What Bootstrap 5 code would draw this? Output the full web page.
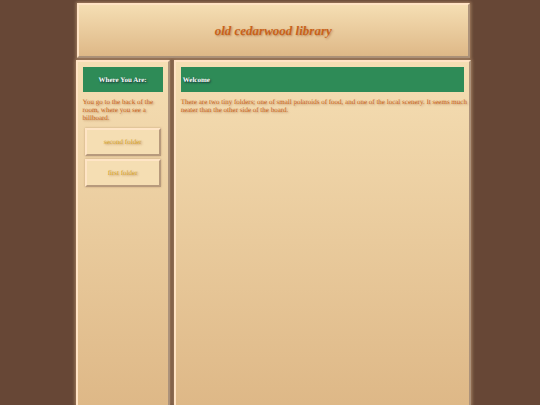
<!DOCTYPE html>
<html lang="en">
<head>
<meta charset="utf-8">
<meta name="viewport" content="width=device-width, initial-scale=1">
<title>old cedarwood library</title>
<link href="https://cdn.jsdelivr.net/npm/bootstrap@5.3.0/dist/css/bootstrap.min.css" rel="stylesheet">
<style>
body { background: #674736; color: #c8641e; font: 7px/8px "Liberation Serif", "Times New Roman", serif; text-rendering: geometricPrecision; text-shadow: 1px 1px 2px rgba(139,69,19,.45); }
.library { width: 73.2%; margin-left: 14%; }
.panel {
  background: linear-gradient(#f5deb3, #deb887);
  border: 2px solid; border-color: #ffe3c4 #ac927a #ac927a #ffe3c4;
  box-shadow: 0 0 3px 1px #a48061;
}
.masthead { min-height: 55px; margin: 3px 1px 2px; }
.masthead h1 { font-size: 13px; line-height: 16px; font-weight: 700; font-style: italic; color: #c8621a; }
.panels { gap: 4px; }
.side { width: 23.8%; }
.side, .main { padding: 5px; }
.main p { margin: 0 -4px 0 0; }
.banner { background: #2e8b57; color: #fff; min-height: 25px; padding: 0 2px; margin-bottom: 6px; }
.banner h2 { font-size: 7px; line-height: 8px; font-weight: 700; text-shadow: 1px 1px 2px #123; }
.folders { gap: 3px; padding: 0 2px; margin-top: 6px; }
.folder {
  font-size: 7px; line-height: 8px; min-height: 28px; color: #d4a32a; background: #f5deb3;
  border: 2px solid; border-color: #ffe5c6 #b79a7c #b79a7c #ffe5c6; border-radius: 0;
  box-shadow: 0 0 2px #c5a27b; text-shadow: inherit;
}
.folder:hover { color: #b8860b; background: #ffe9c4; }
</style>
<script defer src="https://cdn.jsdelivr.net/npm/bootstrap@5.3.0/dist/js/bootstrap.bundle.min.js"></script>
</head>
<body>
<div class="library d-flex flex-column vh-100">
  <header class="masthead panel d-flex align-items-center justify-content-center flex-shrink-0">
    <h1 class="m-0">old cedarwood library</h1>
  </header>
  <div class="panels d-flex flex-grow-1">
    <aside class="side panel border-bottom-0 flex-shrink-0">
      <div class="banner d-flex align-items-center justify-content-center"><h2 class="m-0">Where You Are:</h2></div>
      <p class="m-0">You go to the back of the room, where you see a billboard.</p>
      <nav class="folders d-flex flex-column" aria-label="Folders">
        <a class="folder btn p-0 d-flex align-items-center justify-content-center" href="#second">second folder</a>
        <a class="folder btn p-0 d-flex align-items-center justify-content-center" href="#first">first folder</a>
      </nav>
    </aside>
    <main class="main panel border-bottom-0 flex-grow-1">
      <div class="banner d-flex align-items-center"><h2 class="m-0">Welcome</h2></div>
      <p>There are two tiny folders; one of small polaroids of food, and one of the local scenery. It seems much neater than the other side of the board.</p>
    </main>
  </div>
</div>
</body>
</html>
